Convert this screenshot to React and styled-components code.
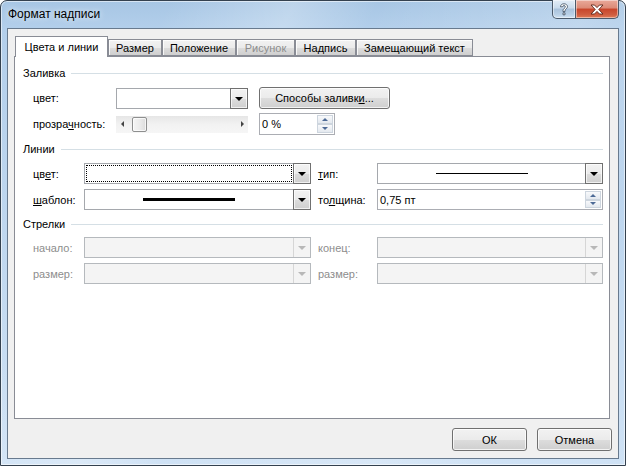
import React from 'react';
import styled, { createGlobalStyle } from 'styled-components';

const GlobalStyle = createGlobalStyle`
  html, body { margin: 0; padding: 0; width: 626px; height: 466px; overflow: hidden; }
  body { font-family: "Liberation Sans", Arial, sans-serif; font-size: 11px; color: #000; background: #fff; }
  u { text-decoration: underline; text-underline-offset: 1px; }
`;

const Window = styled.div`
  width: 626px;
  height: 466px;
  box-sizing: border-box;
  display: flex;
  flex-direction: column;
  padding: 0 6px 6px 6px;
  border: 1px solid #34414f;
  border-radius: 7px 7px 0 0;
  background:
    linear-gradient(115deg, rgba(255,255,255,0) 20%, rgba(255,255,255,0.25) 35%, rgba(255,255,255,0) 45%, rgba(255,255,255,0.2) 70%, rgba(255,255,255,0) 85%),
    linear-gradient(180deg, #a7c6e4 0px, #b3cfeb 28px, #c2d9f0 60%, #cfe2f5 100%);
  box-shadow: inset 0 0 0 1px rgba(255,255,255,0.55);
`;

const TitleBar = styled.div`
  height: 27px;
  display: flex;
  align-items: center;
  flex-shrink: 0;
`;

const Title = styled.div`
  flex: 1;
  padding-left: 1px;
  padding-bottom: 1px;
  font-family: "Liberation Sans", Arial, sans-serif;
  font-size: 12px;
  color: #000;
  text-shadow: 0 0 6px rgba(255,255,255,0.9);
`;

const Controls = styled.div`
  align-self: flex-start;
  display: flex;
  margin-top: -1px;
`;

const CaptionButton = styled.div`
  box-sizing: border-box;
  width: ${p => p.$w}px;
  height: 19px;
  display: flex;
  align-items: center;
  justify-content: center;
  border: 1px solid #4b5a6b;
  border-top: none;
  border-left-width: ${p => (p.$first ? 1 : 0)}px;
  border-radius: ${p => (p.$first ? '0 0 0 5px' : '0 0 5px 0')};
  background: ${p =>
    p.$close
      ? 'linear-gradient(180deg, #e9a99a 0%, #dc8a76 45%, #c8452b 50%, #cf5c3f 80%, #e07a55 100%)'
      : 'linear-gradient(180deg, #e3edf7 0%, #c9dbec 45%, #a9c2dc 50%, #b9d0e6 80%, #d0e2f3 100%)'};
  box-shadow: inset 0 0 0 1px rgba(255,255,255,0.45);
`;

const Client = styled.div`
  flex: 1;
  display: flex;
  flex-direction: column;
  background: #f0f0f0;
  border: 1px solid #687a8e;
  padding: 7px 6px 7px 6px;
`;

const TabStrip = styled.div`
  display: flex;
  align-items: flex-end;
  height: 20px;
  padding-left: 1px;
  position: relative;
  z-index: 1;
`;

const Tab = styled.div`
  box-sizing: border-box;
  width: ${p => p.$w}px;
  height: ${p => (p.$active ? 21 : 17)}px;
  margin-bottom: ${p => (p.$active ? -1 : 0)}px;
  display: flex;
  align-items: center;
  justify-content: center;
  padding-top: ${p => (p.$active ? 0 : 1)}px;
  border: 1px solid #898c95;
  border-bottom: ${p => (p.$active ? 'none' : '1px solid #898c95')};
  background: ${p =>
    p.$active ? '#fff' : 'linear-gradient(180deg, #f2f2f2 0%, #ebebeb 50%, #dddddd 51%, #cfcfcf 100%)'};
  box-shadow: ${p => (p.$active ? 'none' : 'inset 1px 1px 0 rgba(255,255,255,0.8)')};
  color: ${p => (p.$disabled ? '#8d8d8d' : '#000')};
  white-space: nowrap;
`;

const Panel = styled.div`
  box-sizing: border-box;
  width: 596px;
  height: 363px;
  background: #fff;
  border: 1px solid #898c95;
  padding: 9px 6px 0 8px;
`;

const Heading = styled.div`
  height: 14px;
  display: flex;
  align-items: center;
  gap: 6px;
  margin-top: ${p => p.$mt || 0}px;
  &::after {
    content: '';
    flex: 1;
    height: 1px;
    background: #d5dfe5;
  }
`;

const FieldGrid = styled.div`
  display: grid;
  grid-template-columns: ${p => p.$cols};
  grid-auto-rows: ${p => p.$rows};
  row-gap: ${p => p.$gap}px;
  align-items: center;
  padding-left: 10px;
  margin-top: ${p => p.$mt}px;
`;

const Label = styled.div`
  padding-left: ${p => p.$pad || 0}px;
  color: ${p => (p.$disabled ? '#8d8d8d' : '#000')};
  white-space: nowrap;
`;

const Combo = styled.div`
  box-sizing: border-box;
  height: ${p => p.$h || 21}px;
  display: flex;
  border: 1px solid ${p => (p.$disabled ? '#b5b9bd' : '#a5a8ad')};
  background: ${p => (p.$disabled ? '#f4f4f4' : '#fff')};
`;

const ComboValue = styled.div`
  flex: 1;
  display: flex;
  align-items: center;
  justify-content: center;
  margin: 1px;
  outline: ${p => (p.$focus ? '1px dotted #000' : 'none')};
  outline-offset: -1px;
`;

const DropButton = styled.div`
  box-sizing: border-box;
  width: ${p => (p.$disabled ? 17 : 18)}px;
  margin: ${p => (p.$disabled ? '0' : '-1px -1px -1px 0')};
  display: flex;
  align-items: center;
  justify-content: center;
  border: ${p => (p.$disabled ? 'none' : '1px solid #707070')};
  border-left: 1px solid ${p => (p.$disabled ? '#d6d6d6' : '#707070')};
  background: ${p =>
    p.$disabled ? '#f4f4f4' : 'linear-gradient(180deg, #f2f2f2 0%, #ebebeb 50%, #dddddd 51%, #cfcfcf 100%)'};
  box-shadow: ${p => (p.$disabled ? 'none' : 'inset 0 0 0 1px rgba(255,255,255,0.7)')};
  &::before {
    content: '';
    border-left: 4px solid transparent;
    border-right: 4px solid transparent;
    border-top: 4px solid ${p => (p.$disabled ? '#b8b8b8' : '#000')};
    margin-top: 1px;
  }
`;

const LineSample = styled.div`
  width: ${p => p.$w}px;
  height: ${p => p.$t}px;
  background: #000;
`;

const PushButton = styled.div`
  box-sizing: border-box;
  width: ${p => p.$w}px;
  height: ${p => p.$h || 23}px;
  display: flex;
  align-items: center;
  justify-content: center;
  border: 1px solid #707070;
  border-radius: 3px;
  background: linear-gradient(180deg, #f2f2f2 0%, #ebebeb 50%, #dddddd 51%, #cfcfcf 100%);
  box-shadow: inset 0 0 0 1px rgba(255,255,255,0.75);
  white-space: nowrap;
  margin-left: ${p => p.$ml || 0}px;
`;

const Slider = styled.div`
  box-sizing: border-box;
  height: 17px;
  display: flex;
  align-items: center;
  padding: 0 4px 0 5px;
  background: linear-gradient(180deg, #e6e6e6 0%, #f2f2f2 50%, #f6f6f6 100%);
`;

const Arrow = styled.div`
  width: 0;
  height: 0;
  border-top: 3px solid transparent;
  border-bottom: 3px solid transparent;
  ${p => (p.$dir === 'left' ? 'border-right: 3px solid #444;' : 'border-left: 3px solid #444;')}
`;

const Thumb = styled.div`
  box-sizing: border-box;
  width: 15px;
  height: 15px;
  margin-left: 8px;
  border: 1px solid #8e8f8f;
  border-radius: 2px;
  background: linear-gradient(90deg, #f5f5f5 0%, #ececec 50%, #dcdcdc 100%);
  box-shadow: inset 0 0 0 1px rgba(255,255,255,0.7);
`;

const Spacer = styled.div`
  flex: 1;
`;

const Edit = styled.div`
  box-sizing: border-box;
  width: ${p => p.$w || 'auto'};
  height: ${p => p.$h}px;
  display: flex;
  border: 1px solid #abadb3;
  background: #fff;
  margin-left: ${p => p.$ml || 0}px;
`;

const EditText = styled.div`
  flex: 1;
  display: flex;
  align-items: center;
  padding-left: 2px;
`;

const Spin = styled.div`
  width: 16px;
  display: flex;
  flex-direction: column;
  padding: 1px;
`;

const SpinHalf = styled.div`
  flex: 1;
  display: flex;
  align-items: center;
  justify-content: center;
  border: 1px solid #cdd5de;
  background: linear-gradient(180deg, #f8f9fb 0%, #e4e9ef 100%);
  &::before {
    content: '';
    border-left: 3px solid transparent;
    border-right: 3px solid transparent;
    ${p => (p.$up ? 'border-bottom: 3px solid #4d6a96;' : 'border-top: 3px solid #4d6a96;')}
  }
`;

const ButtonRow = styled.div`
  display: flex;
  justify-content: flex-end;
  gap: 10px;
  margin-top: 9px;
`;

function DropCombo({ children, disabled, focus }) {
  return (
    <Combo $disabled={disabled}>
      <ComboValue $focus={focus}>{children}</ComboValue>
      <DropButton $disabled={disabled} />
    </Combo>
  );
}

function SpinEdit({ value, w, h, ml }) {
  return (
    <Edit $w={w} $h={h} $ml={ml}>
      <EditText>{value}</EditText>
      <Spin>
        <SpinHalf $up />
        <SpinHalf />
      </Spin>
    </Edit>
  );
}

const tabs = [
  { label: 'Цвета и линии', w: 93, active: true },
  { label: 'Размер', w: 54 },
  { label: 'Положение', w: 74 },
  { label: 'Рисунок', w: 59, disabled: true },
  { label: 'Надпись', w: 61 },
  { label: 'Замещающий текст', w: 117 },
];

export default function App() {
  return (
    <>
      <GlobalStyle />
      <Window>
        <TitleBar>
          <Title>Формат надписи</Title>
          <Controls>
            <CaptionButton $w={24} $first>
              <svg width="10" height="13" viewBox="0 0 10 13">
                <path
                  d="M1.5 3.8 C1.5 1.8 3 0.8 5 0.8 C7 0.8 8.5 2 8.5 3.7 C8.5 5.6 6 6 6 7.8 L6 8.6 L4 8.6 L4 7.6 C4 5.4 6.4 5.1 6.4 3.8 C6.4 3 5.8 2.6 5 2.6 C4.1 2.6 3.6 3.1 3.6 3.8 Z M4 9.8 L6 9.8 L6 11.8 L4 11.8 Z"
                  fill="#fff"
                  stroke="#3b4a5c"
                  strokeWidth="0.8"
                />
              </svg>
            </CaptionButton>
            <CaptionButton $w={43} $close>
              <svg width="14" height="11" viewBox="0 0 14 11">
                <path
                  d="M1 1 L4.5 1 L7 3.6 L9.5 1 L13 1 L8.8 5.5 L13 10 L9.5 10 L7 7.4 L4.5 10 L1 10 L5.2 5.5 Z"
                  fill="#fff"
                  stroke="#5a2417"
                  strokeWidth="0.9"
                  strokeLinejoin="round"
                />
              </svg>
            </CaptionButton>
          </Controls>
        </TitleBar>
        <Client>
          <TabStrip>
            {tabs.map(t => (
              <Tab key={t.label} $w={t.w} $active={t.active} $disabled={t.disabled}>
                {t.label}
              </Tab>
            ))}
          </TabStrip>
          <Panel>
            <Heading>Заливка</Heading>
            <FieldGrid $cols="83px 132px 143px" $rows="auto" $gap={4} $mt={7}>
              <Label>цвет:</Label>
              <DropCombo />
              <PushButton $w={131} $h={22} $ml={11}>
                Способы заливк<u>и</u>...
              </PushButton>
              <Label>прозра<u>ч</u>ность:</Label>
              <Slider>
                <Arrow $dir="left" />
                <Thumb />
                <Spacer />
                <Arrow $dir="right" />
              </Slider>
              <SpinEdit value="0 %" w="76px" h={22} ml={11} />
            </FieldGrid>

            <Heading $mt={7}>Линии</Heading>
            <FieldGrid $cols="51px 227px 66px 226px" $rows="21px" $gap={5} $mt={7}>
              <Label>цв<u>е</u>т:</Label>
              <DropCombo focus />
              <Label $pad={7}>
                <u>т</u>ип:
              </Label>
              <DropCombo>
                <LineSample $w={92} $t={1} />
              </DropCombo>
              <Label>
                <u>ш</u>аблон:
              </Label>
              <DropCombo>
                <LineSample $w={92} $t={3} />
              </DropCombo>
              <Label $pad={7}>
                то<u>л</u>щина:
              </Label>
              <SpinEdit value="0,75 пт" h={21} />
            </FieldGrid>

            <Heading $mt={7}>Стрелки</Heading>
            <FieldGrid $cols="51px 227px 66px 226px" $rows="21px" $gap={5} $mt={6}>
              <Label $disabled>начало:</Label>
              <DropCombo disabled />
              <Label $disabled $pad={7}>
                конец:
              </Label>
              <DropCombo disabled />
              <Label $disabled>размер:</Label>
              <DropCombo disabled />
              <Label $disabled $pad={7}>
                размер:
              </Label>
              <DropCombo disabled />
            </FieldGrid>
          </Panel>
          <ButtonRow>
            <PushButton $w={75}>ОК</PushButton>
            <PushButton $w={75}>Отмена</PushButton>
          </ButtonRow>
        </Client>
      </Window>
    </>
  );
}
